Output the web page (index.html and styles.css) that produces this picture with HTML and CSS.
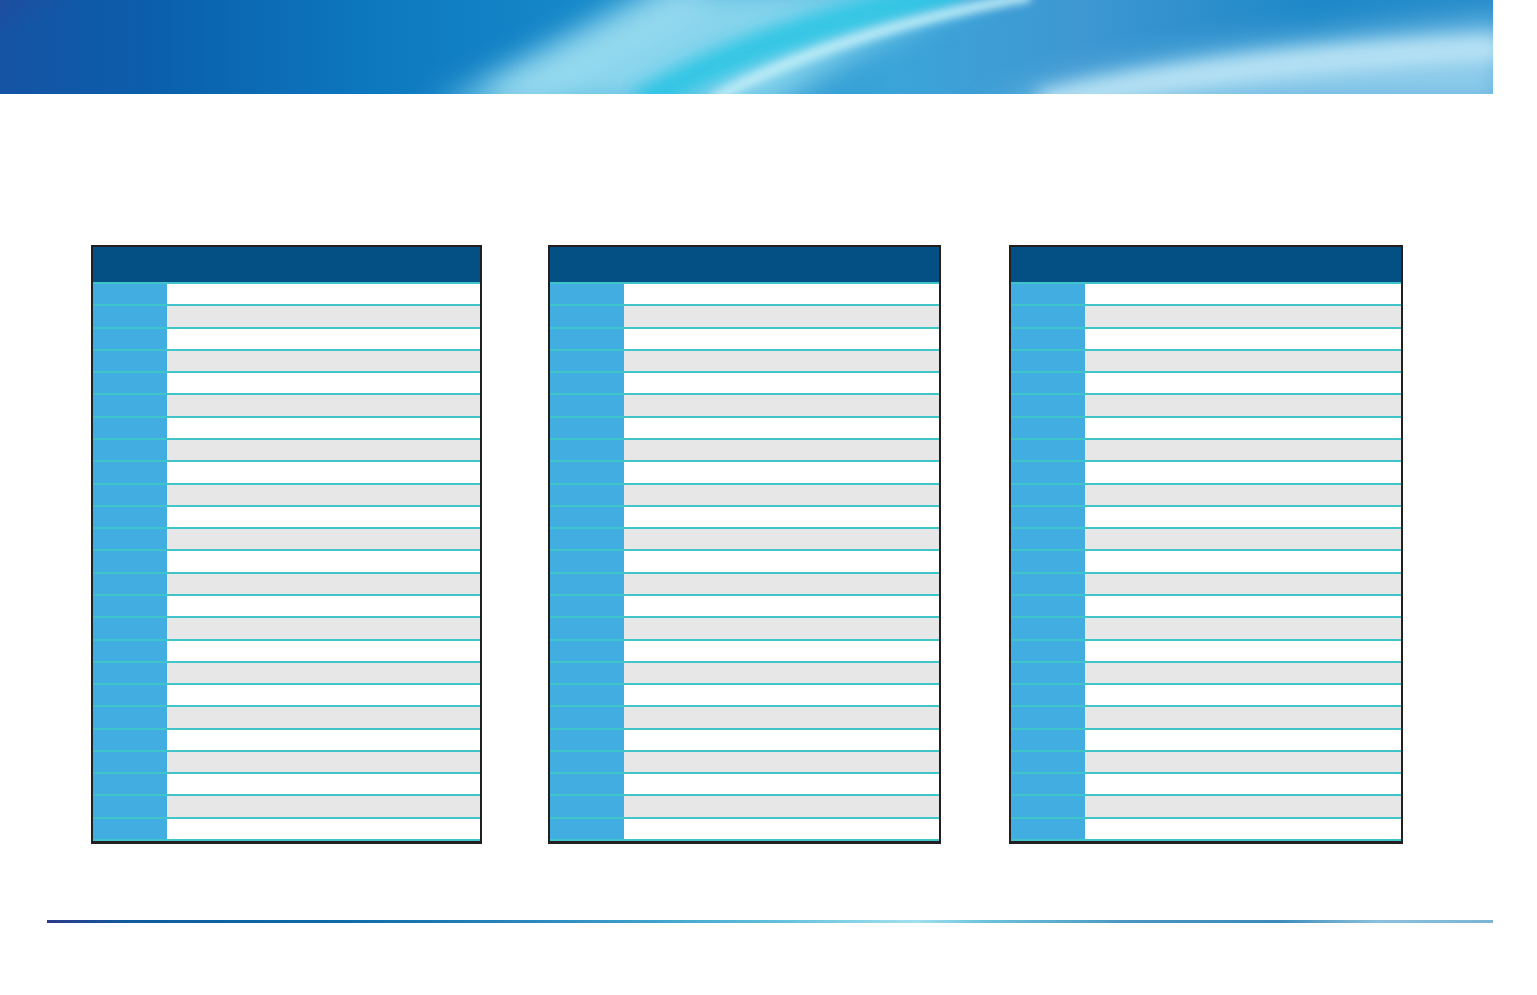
FILE: index.html
```html
<!DOCTYPE html>
<html lang="en">
<head>
<meta charset="utf-8">
<title>Tables</title>
<link rel="stylesheet" href="styles.css">
</head>
<body>
<header class="banner">
  <svg class="banner-art" viewBox="0 0 1493 94" width="1493" height="94" preserveAspectRatio="none" aria-hidden="true">
    <defs>
      <linearGradient id="base" x1="0" y1="0" x2="1" y2="0">
        <stop offset="0" stop-color="#1553a4"/>
        <stop offset="0.1" stop-color="#0b5eab"/>
        <stop offset="0.25" stop-color="#0d78bf"/>
        <stop offset="0.4" stop-color="#178aca"/>
        <stop offset="0.6" stop-color="#3ba4d8"/>
        <stop offset="0.72" stop-color="#3f98d2"/>
        <stop offset="0.88" stop-color="#1e88c8"/>
        <stop offset="1" stop-color="#258ccb"/>
      </linearGradient>
      <radialGradient id="corner" cx="0" cy="0" r="1">
        <stop offset="0" stop-color="#3c3a8e" stop-opacity="0.8"/>
        <stop offset="1" stop-color="#3c3a8e" stop-opacity="0"/>
      </radialGradient>
      <filter id="b4" x="-20%" y="-50%" width="140%" height="200%"><feGaussianBlur stdDeviation="4"/></filter>
      <filter id="b8" x="-20%" y="-50%" width="140%" height="200%"><feGaussianBlur stdDeviation="8"/></filter>
      <filter id="b16" x="-20%" y="-60%" width="140%" height="220%"><feGaussianBlur stdDeviation="16"/></filter>
    </defs>
    <rect width="1493" height="94" fill="url(#base)"/>
    <ellipse cx="0" cy="0" rx="110" ry="50" fill="url(#corner)"/>
    <path d="M990 110 Q1150 48 1510 22 L1510 110 Z" fill="#8ccbea" filter="url(#b16)"/>
    <path d="M1040 104 Q1220 62 1500 48" stroke="#bfe6f6" stroke-width="26" fill="none" filter="url(#b8)" opacity="0.85"/>
    <path d="M430 110 Q590 30 680 -15 L990 -15 Q860 40 770 110 Z" fill="#86d4ec" filter="url(#b16)"/>
    <path d="M640 104 Q760 32 960 -10" stroke="#2cc5e4" stroke-width="30" fill="none" filter="url(#b8)" opacity="0.9"/>
    <path d="M500 104 Q610 40 700 -8" stroke="#a8e0f2" stroke-width="36" fill="none" filter="url(#b16)" opacity="0.6"/>
    <path d="M712 100 Q830 34 1030 -4" stroke="#c4eff9" stroke-width="11" fill="none" filter="url(#b4)" opacity="0.9"/>
  </svg>
</header>

<main class="content">
  <section class="tables">
    <div class="sheet sheet-a">
      <div class="sheet-head"></div>
      <div class="sheet-body">
        <div class="row"><div class="key"></div><div class="val"></div></div>
        <div class="row"><div class="key"></div><div class="val"></div></div>
        <div class="row"><div class="key"></div><div class="val"></div></div>
        <div class="row"><div class="key"></div><div class="val"></div></div>
        <div class="row"><div class="key"></div><div class="val"></div></div>
        <div class="row"><div class="key"></div><div class="val"></div></div>
        <div class="row"><div class="key"></div><div class="val"></div></div>
        <div class="row"><div class="key"></div><div class="val"></div></div>
        <div class="row"><div class="key"></div><div class="val"></div></div>
        <div class="row"><div class="key"></div><div class="val"></div></div>
        <div class="row"><div class="key"></div><div class="val"></div></div>
        <div class="row"><div class="key"></div><div class="val"></div></div>
        <div class="row"><div class="key"></div><div class="val"></div></div>
        <div class="row"><div class="key"></div><div class="val"></div></div>
        <div class="row"><div class="key"></div><div class="val"></div></div>
        <div class="row"><div class="key"></div><div class="val"></div></div>
        <div class="row"><div class="key"></div><div class="val"></div></div>
        <div class="row"><div class="key"></div><div class="val"></div></div>
        <div class="row"><div class="key"></div><div class="val"></div></div>
        <div class="row"><div class="key"></div><div class="val"></div></div>
        <div class="row"><div class="key"></div><div class="val"></div></div>
        <div class="row"><div class="key"></div><div class="val"></div></div>
        <div class="row"><div class="key"></div><div class="val"></div></div>
        <div class="row"><div class="key"></div><div class="val"></div></div>
        <div class="row"><div class="key"></div><div class="val"></div></div>
      </div>
    </div>

    <div class="sheet sheet-b">
      <div class="sheet-head"></div>
      <div class="sheet-body">
        <div class="row"><div class="key"></div><div class="val"></div></div>
        <div class="row"><div class="key"></div><div class="val"></div></div>
        <div class="row"><div class="key"></div><div class="val"></div></div>
        <div class="row"><div class="key"></div><div class="val"></div></div>
        <div class="row"><div class="key"></div><div class="val"></div></div>
        <div class="row"><div class="key"></div><div class="val"></div></div>
        <div class="row"><div class="key"></div><div class="val"></div></div>
        <div class="row"><div class="key"></div><div class="val"></div></div>
        <div class="row"><div class="key"></div><div class="val"></div></div>
        <div class="row"><div class="key"></div><div class="val"></div></div>
        <div class="row"><div class="key"></div><div class="val"></div></div>
        <div class="row"><div class="key"></div><div class="val"></div></div>
        <div class="row"><div class="key"></div><div class="val"></div></div>
        <div class="row"><div class="key"></div><div class="val"></div></div>
        <div class="row"><div class="key"></div><div class="val"></div></div>
        <div class="row"><div class="key"></div><div class="val"></div></div>
        <div class="row"><div class="key"></div><div class="val"></div></div>
        <div class="row"><div class="key"></div><div class="val"></div></div>
        <div class="row"><div class="key"></div><div class="val"></div></div>
        <div class="row"><div class="key"></div><div class="val"></div></div>
        <div class="row"><div class="key"></div><div class="val"></div></div>
        <div class="row"><div class="key"></div><div class="val"></div></div>
        <div class="row"><div class="key"></div><div class="val"></div></div>
        <div class="row"><div class="key"></div><div class="val"></div></div>
        <div class="row"><div class="key"></div><div class="val"></div></div>
      </div>
    </div>

    <div class="sheet sheet-c">
      <div class="sheet-head"></div>
      <div class="sheet-body">
        <div class="row"><div class="key"></div><div class="val"></div></div>
        <div class="row"><div class="key"></div><div class="val"></div></div>
        <div class="row"><div class="key"></div><div class="val"></div></div>
        <div class="row"><div class="key"></div><div class="val"></div></div>
        <div class="row"><div class="key"></div><div class="val"></div></div>
        <div class="row"><div class="key"></div><div class="val"></div></div>
        <div class="row"><div class="key"></div><div class="val"></div></div>
        <div class="row"><div class="key"></div><div class="val"></div></div>
        <div class="row"><div class="key"></div><div class="val"></div></div>
        <div class="row"><div class="key"></div><div class="val"></div></div>
        <div class="row"><div class="key"></div><div class="val"></div></div>
        <div class="row"><div class="key"></div><div class="val"></div></div>
        <div class="row"><div class="key"></div><div class="val"></div></div>
        <div class="row"><div class="key"></div><div class="val"></div></div>
        <div class="row"><div class="key"></div><div class="val"></div></div>
        <div class="row"><div class="key"></div><div class="val"></div></div>
        <div class="row"><div class="key"></div><div class="val"></div></div>
        <div class="row"><div class="key"></div><div class="val"></div></div>
        <div class="row"><div class="key"></div><div class="val"></div></div>
        <div class="row"><div class="key"></div><div class="val"></div></div>
        <div class="row"><div class="key"></div><div class="val"></div></div>
        <div class="row"><div class="key"></div><div class="val"></div></div>
        <div class="row"><div class="key"></div><div class="val"></div></div>
        <div class="row"><div class="key"></div><div class="val"></div></div>
        <div class="row"><div class="key"></div><div class="val"></div></div>
      </div>
    </div>
  </section>
</main>

<footer class="footer">
  <div class="rule"></div>
</footer>
</body>
</html>
```

FILE: styles.css
```css
* { box-sizing: border-box; }

html, body {
  margin: 0;
  padding: 0;
  background: #ffffff;
  font-family: "Liberation Sans", Arial, sans-serif;
}

body {
  width: 1537px;
  height: 995px;
  overflow: hidden;
}

.banner {
  width: 1493px;
  height: 94px;
  overflow: hidden;
}

.banner-art {
  display: block;
  width: 1493px;
  height: 94px;
}

.content {
  padding: 151px 0 0 91px;
}

.tables {
  display: flex;
  align-items: flex-start;
}

.sheet {
  height: 599px;
  border: 2px solid #231f20;
  border-bottom-width: 3px;
  display: flex;
  flex-direction: column;
  background: #ffffff;
}

.sheet-a { width: 391px; }
.sheet-b { width: 393px; margin-left: 66px; }
.sheet-c { width: 394px; margin-left: 68px; }

.sheet-head {
  height: 35px;
  flex: 0 0 35px;
  background: #044f83;
}

.sheet-body {
  flex: 1;
  display: flex;
  flex-direction: column;
  border-bottom: 2px solid #3fc4ca;
}

.row {
  flex: 1;
  display: grid;
  grid-template-columns: 74px 1fr;
  border-top: 2px solid #3fc4ca;
}

.key {
  background: #41ade1;
}

.val {
  background: #ffffff;
}

.row:nth-child(even) .val {
  background: #e7e7e7;
}

.footer {
  padding: 76px 0 0 47px;
}

.rule {
  width: 1446px;
  height: 3px;
  background: linear-gradient(90deg,
    #2b3a8a 0%,
    #0f5d9f 6%,
    #0f6aa8 20%,
    #2a86bc 33%,
    #3ea3cc 42%,
    #60bedb 50%,
    #a0e0ee 60%,
    #6cc2dc 65%,
    #4a94c0 75%,
    #3a8bbb 85%,
    #8cc0dc 92%,
    #7ab4d6 100%);
}
```
